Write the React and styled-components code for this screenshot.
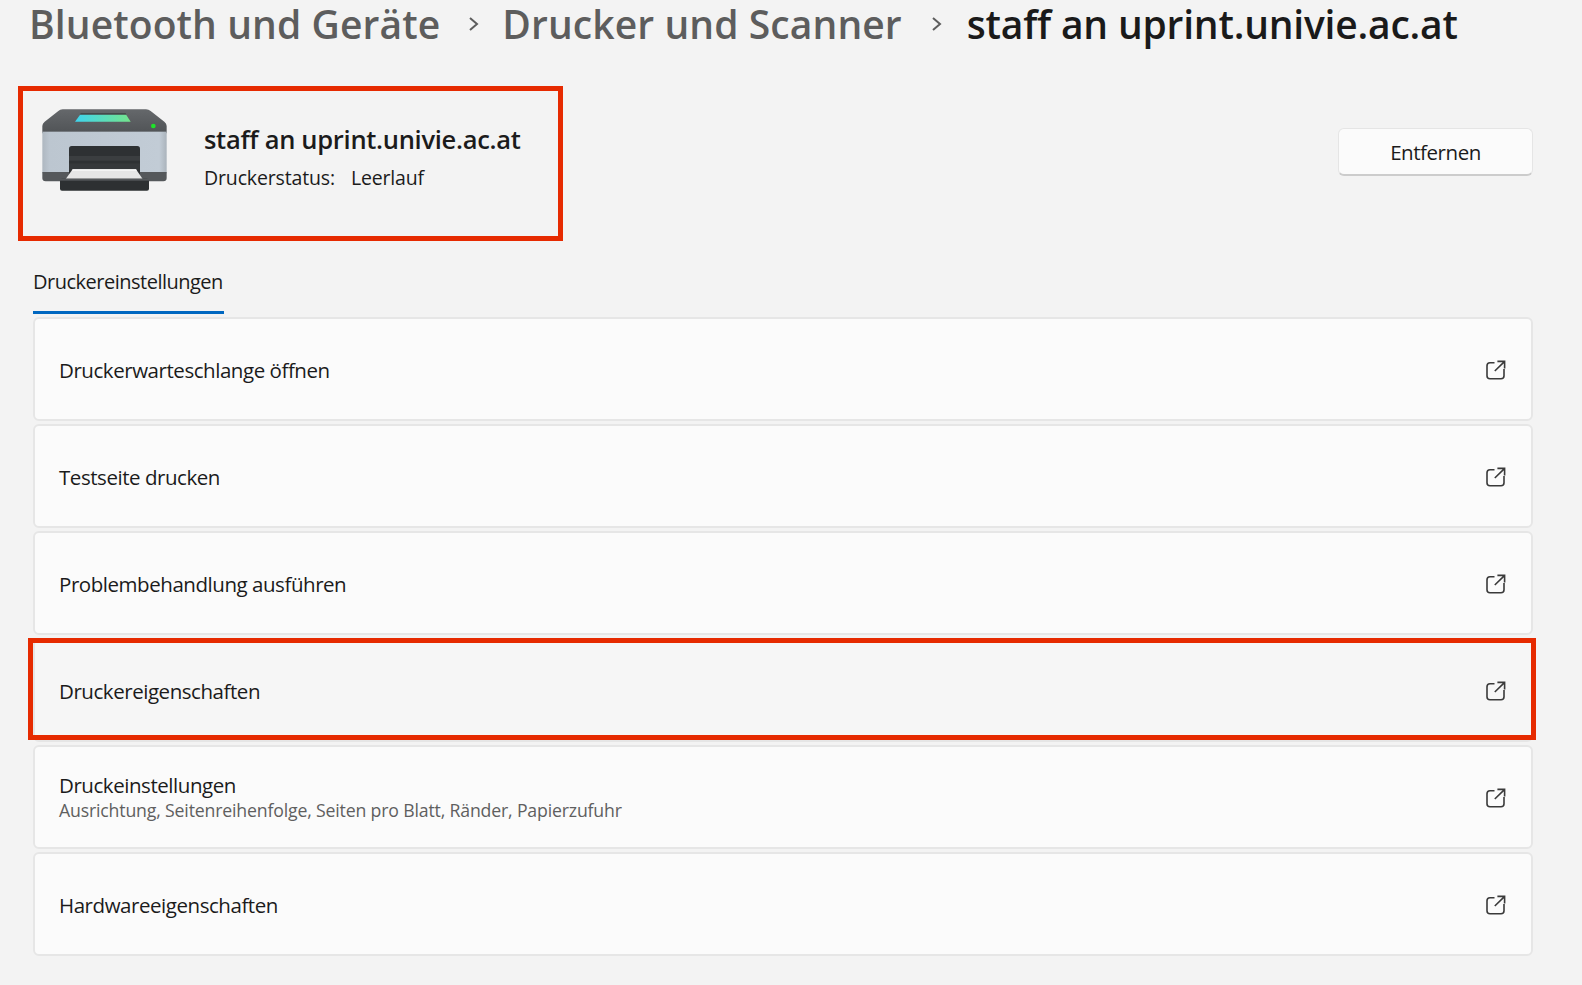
import React from 'react'
import styled,{createGlobalStyle} from 'styled-components'

const Global=createGlobalStyle`
  html,body{
    margin:0;
    padding:0;
    background:#f3f3f3;
  }
  body{
    font-family:"Open Sans","Noto Sans",sans-serif;
    color:#1b1b1b;
  }
`;

const Page=styled.div`
  width:1582px;
  height:985px;
  box-sizing:border-box;
  padding:0 49px 0 33px;
  overflow:hidden;
  background:#f3f3f3;
`;

const Breadcrumb=styled.div`
  display:flex;
  align-items:center;
  height:48px;
  margin-left:-4px;
  margin-right:-49px;
`;
const Crumb=styled.span`
  font-size:39px;
  font-weight:600;
  line-height:48px;
  white-space:nowrap;
  letter-spacing:${({$spacing})=>$spacing}px;
  color:${({$current})=>$current ? "#1a1a1a" : "#5d5d5d"};
`;
const CrumbSep=styled.svg`
  width:14px;
  height:18px;
  margin:0 ${({$after})=>$after}px 0 ${({$before})=>$before}px;
  flex:none;
`;

const Header=styled.div`
  display:flex;
  align-items:flex-start;
  justify-content:space-between;
  margin-top:61px;
  height:164px;
`;
const PrinterBlock=styled.div`
  display:flex;
  align-items:flex-start;
  position:relative;
  margin-left:9px;
`;
const HeaderMark=styled.div`
  position:absolute;
  left:-24.5px;
  top:-23px;
  width:545px;
  height:155px;
  box-sizing:border-box;
  border:5px solid #e62a00;
`;
const PrinterIcon=styled.svg`
  width:150px;
  height:100px;
  flex:none;
  margin:-9px 0 0 -12px;
`;
const PrinterText=styled.div`
  margin-left:24px;
  padding-top:12px;
`;
const PrinterName=styled.div`
  font-size:25.5px;
  font-weight:600;
  line-height:36px;
  letter-spacing:-0.29px;
  white-space:nowrap;
`;
const PrinterStatus=styled.div`
  display:flex;
  gap:16px;
  font-size:19.5px;
  line-height:28px;
  margin-top:7px;
  letter-spacing:-0.15px;
`;
const RemoveButton=styled.button`
  width:195px;
  height:48px;
  margin-top:19px;
  box-sizing:border-box;
  background:#fbfbfb;
  border:1.5px solid #e5e5e5;
  border-bottom:2px solid #cccccc;
  border-radius:6px;
  font-family:inherit;
  font-size:20.5px;
  letter-spacing:-0.45px;
  color:#1b1b1b;
`;

const Tab=styled.div`
  width:fit-content;
  height:48px;
  box-sizing:border-box;
  margin-top:-7px;
  padding:1px 1px 0 0;
  font-size:20px;
  line-height:30px;
  letter-spacing:-0.5px;
  border-bottom:3px solid #0067c0;
  white-space:nowrap;
`;

const List=styled.div`
  display:flex;
  flex-direction:column;
  gap:3px;
  margin-top:3px;
`;
const Row=styled.div`
  position:relative;
  height:104px;
  box-sizing:border-box;
  display:flex;
  align-items:center;
  justify-content:space-between;
  padding:0 25px 0 24px;
  background:${({$marked})=>$marked ? "#f6f6f6" : "#fbfbfb"};
  border:2px solid #e6e6e6;
  border-radius:6px;
`;
const RowMark=styled.div`
  position:absolute;
  left:-7px;
  right:-5px;
  top:-2px;
  bottom:0;
  border:5px solid #e62a00;
`;
const RowText=styled.div`
  display:flex;
  flex-direction:column;
  padding-top:1px;
  padding-bottom:${({$hasHint})=>$hasHint ? 3 : 0}px;
`;
const RowLabel=styled.div`
  font-size:20.5px;
  line-height:28px;
  letter-spacing:-0.45px;
  white-space:nowrap;
`;
const RowHint=styled.div`
  font-size:17.7px;
  line-height:22px;
  letter-spacing:-0.17px;
  color:#5f5f5f;
  white-space:nowrap;
`;
const LinkIcon=styled.svg`
  width:20px;
  height:20px;
  flex:none;
  margin-top:1px;
`;

const Chevron=({before,after})=>(
  <CrumbSep viewBox="0 0 14 18" $before={before} $after={after}>
    <path d="M3 3 L10 9 L3 15" fill="none" stroke="#5d5d5d" strokeWidth="2"/>
  </CrumbSep>
)

const ExternalLink=()=>(
  <LinkIcon viewBox="0 0 20 20">
    <path d="M8.5 2.7 H4 a3 3 0 0 0 -3 3 V15.8 a3 3 0 0 0 3 3 H15 a3 3 0 0 0 3 -3 V9" fill="none" stroke="#3a3a3a" strokeWidth="1.6"/>
    <path d="M8.8 11 L18.4 1.6 M11.4 1.4 H18.6 V8.6" fill="none" stroke="#3a3a3a" strokeWidth="1.6"/>
  </LinkIcon>
)

const Printer=()=>(
  <PrinterIcon viewBox="0 0 450 300">
    <defs>
      <linearGradient id="screen" x1="0" x2="1" y1="0" y2="0">
        <stop offset="0" stopColor="#3fd4ee"/>
        <stop offset="1" stopColor="#74e48c"/>
      </linearGradient>
      <linearGradient id="body" x1="0" x2="1" y1="0" y2="0">
        <stop offset="0" stopColor="#aeb7c0"/>
        <stop offset="0.06" stopColor="#bcc6d0"/>
        <stop offset="0.94" stopColor="#c2ccd6"/>
        <stop offset="1" stopColor="#aab3bb"/>
      </linearGradient>
      <linearGradient id="lid" x1="0" x2="0" y1="0" y2="1">
        <stop offset="0" stopColor="#65686b"/>
        <stop offset="1" stopColor="#505356"/>
      </linearGradient>
    </defs>
    <path d="M37 78 Q37 70 44 65 L85 33 Q90 28 98 28 L348 28 Q356 28 362 33 L403 65 Q410 70 410 78 L410 100 L37 100 Z" fill="url(#lid)"/>
    <path d="M152 42 L287 42 L302 65 L135 65 Z" fill="url(#screen)"/>
    <path d="M152 39 L287 39 L289 44 L150 44 Z" fill="#47494b"/>
    <circle cx="370" cy="78" r="7" fill="#1fe32a"/>
    <rect x="37" y="95" width="373" height="125" fill="url(#body)"/>
    <path d="M37 216 H410 V234 Q410 244 400 244 H47 Q37 244 37 234 Z" fill="#55585b"/>
    <rect x="117" y="138" width="213" height="90" rx="8" fill="#2e3133"/>
    <rect x="117" y="168" width="213" height="14" fill="#3b3e40"/>
    <rect x="117" y="190" width="213" height="20" fill="#35383a"/>
    <path d="M128 208 H318 L340 240 H105 Z" fill="#e6e6e6"/>
    <path d="M128 208 H318 L321 212 H125 Z" fill="#f8f8f8"/>
    <rect x="90" y="236" width="267" height="36" rx="6" fill="#2d3032"/>
    <rect x="90" y="236" width="267" height="6" fill="#55585b"/>
  </PrinterIcon>
)

const rows=[
  {label:"Druckerwarteschlange öffnen"},
  {label:"Testseite drucken"},
  {label:"Problembehandlung ausführen"},
  {label:"Druckereigenschaften",marked:true},
  {label:"Druckeinstellungen",hint:"Ausrichtung, Seitenreihenfolge, Seiten pro Blatt, Ränder, Papierzufuhr"},
  {label:"Hardwareeigenschaften"},
]

const App = () => {
  return (
    <Page>
      <Global/>
      <Breadcrumb>
        <Crumb $spacing={0.1}>Bluetooth und Geräte</Crumb>
        <Chevron before={27} after={21}/>
        <Crumb $spacing={0.1}>Drucker und Scanner</Crumb>
        <Chevron before={28} after={23}/>
        <Crumb $current $spacing={-0.2}>staff an uprint.univie.ac.at</Crumb>
      </Breadcrumb>
      <Header>
        <PrinterBlock>
          <HeaderMark/>
          <Printer/>
          <PrinterText>
            <PrinterName>staff an uprint.univie.ac.at</PrinterName>
            <PrinterStatus>
              <span>Druckerstatus:</span>
              <span>Leerlauf</span>
            </PrinterStatus>
          </PrinterText>
        </PrinterBlock>
        <RemoveButton>Entfernen</RemoveButton>
      </Header>
      <Tab>Druckereinstellungen</Tab>
      <List>
        {rows.map((row)=>(
          <Row key={row.label} $marked={row.marked}>
            {row.marked && <RowMark/>}
            <RowText $hasHint={!!row.hint}>
              <RowLabel>{row.label}</RowLabel>
              {row.hint && <RowHint>{row.hint}</RowHint>}
            </RowText>
            <ExternalLink/>
          </Row>
        ))}
      </List>
    </Page>
  )
}

export default App
